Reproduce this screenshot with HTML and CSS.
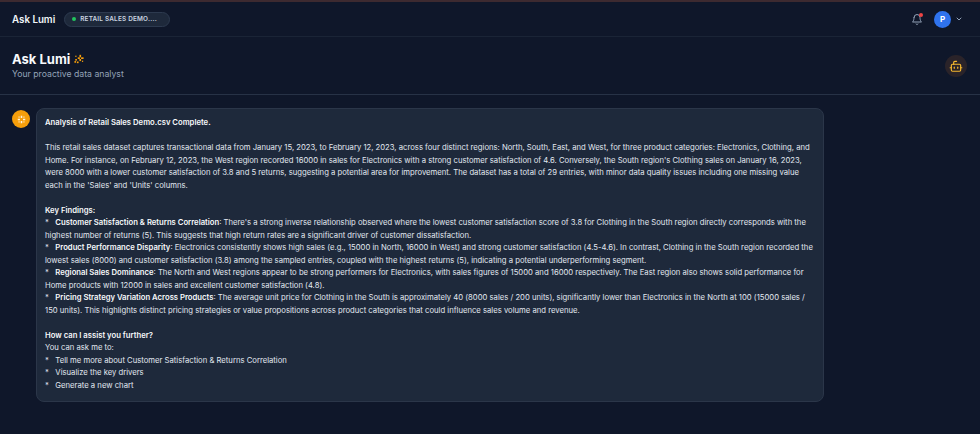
FILE: index.html
```html
<!DOCTYPE html>
<html lang="en">
<head>
    <meta charset="UTF-8">
    <meta name="viewport" content="width=device-width, initial-scale=1.0">
    <title>Ask Lumi</title>
    <link rel="stylesheet" href="styles.css">
</head>
<body>
    <div class="top-strip"></div>

    <!-- Top bar -->
    <header class="topbar">
        <div class="topbar-left">
            <span class="brand">Ask Lumi</span>
            <div class="file-pill">
                <span class="status-dot"></span>
                <span>RETAIL SALES DEMO....</span>
            </div>
        </div>
        <div class="topbar-right">
            <div class="bell">
                <svg width="12" height="13" viewBox="0 0 24 24" fill="none" stroke="#94a3b8" stroke-width="2" stroke-linecap="round" stroke-linejoin="round">
                    <path d="M6 8a6 6 0 0 1 12 0c0 7 3 9 3 9H3s3-2 3-9"/>
                    <path d="M10.3 21a1.9 1.9 0 0 0 3.4 0"/>
                </svg>
                <span class="bell-dot"></span>
            </div>
            <div class="avatar">P</div>
            <svg class="chevron" width="8" height="8" viewBox="0 0 24 24" fill="none" stroke="#94a3b8" stroke-width="3" stroke-linecap="round" stroke-linejoin="round">
                <path d="m6 9 6 6 6-6"/>
            </svg>
        </div>
    </header>

    <!-- Page heading -->
    <section class="page-head">
        <div>
            <h1>Ask Lumi
                <svg class="sparkle" width="10" height="10" viewBox="0 0 24 24" fill="#f59e0b">
                    <rect x="13" y="2" width="4" height="6"/>
                    <rect x="17" y="8" width="6" height="4"/>
                    <rect x="9" y="8" width="5" height="4"/>
                    <rect x="13" y="12" width="4" height="5"/>
                    <rect x="3" y="12" width="4" height="4"/>
                    <rect x="1" y="17" width="4" height="4"/>
                    <rect x="7" y="18" width="4" height="4"/>
                    <rect x="3" y="4" width="3" height="3"/>
                    <rect x="19" y="16" width="3" height="3"/>
                </svg>
            </h1>
            <p class="subtitle">Your proactive data analyst</p>
        </div>
        <div class="bot-btn">
            <svg width="14" height="14" viewBox="0 0 24 24" fill="none" stroke="#f5b82e" stroke-width="2" stroke-linecap="round" stroke-linejoin="round">
                <path d="M8 9V6a2 2 0 0 1 2-2h3"/>
                <rect x="4" y="9" width="16" height="12" rx="2"/>
                <path d="M2 15h2"/>
                <path d="M20 15h2"/>
                <path d="M15 14v2"/>
                <path d="M9 14v2"/>
            </svg>
        </div>
    </section>

    <!-- Chat -->
    <main class="chat">
        <div class="msg-icon">
            <svg width="9" height="9" viewBox="0 0 24 24" fill="#fff3dc">
                <rect x="10" y="2" width="4" height="6"/>
                <rect x="10" y="16" width="4" height="6"/>
                <rect x="2" y="10" width="6" height="4"/>
                <rect x="16" y="10" width="6" height="4"/>
                <rect x="4" y="4" width="3" height="3"/>
                <rect x="17" y="4" width="3" height="3"/>
                <rect x="4" y="17" width="3" height="3"/>
                <rect x="17" y="17" width="3" height="3"/>
            </svg>
        </div>
        <div class="bubble">
            <p><strong>Analysis of Retail Sales Demo.csv Complete.</strong></p>

            <p>This retail sales dataset captures transactional data from January 15, 2023, to February 12, 2023, across four distinct regions: North, South, East, and West, for three product categories: Electronics, Clothing, and Home. For instance, on February 12, 2023, the West region recorded 16000 in sales for Electronics with a strong customer satisfaction of 4.6. Conversely, the South region's Clothing sales on January 16, 2023, were 8000 with a lower customer satisfaction of 3.8 and 5 returns, suggesting a potential area for improvement. The dataset has a total of 29 entries, with minor data quality issues including one missing value each in the 'Sales' and 'Units' columns.</p>

            <div class="block">
                <div><strong>Key Findings:</strong></div>
                <div>*&nbsp;&nbsp;&nbsp;<strong>Customer Satisfaction &amp; Returns Correlation</strong>: There's a strong inverse relationship observed where the lowest customer satisfaction score of 3.8 for Clothing in the South region directly corresponds with the highest number of returns (5). This suggests that high return rates are a significant driver of customer dissatisfaction.</div>
                <div>*&nbsp;&nbsp;&nbsp;<strong>Product Performance Disparity</strong>: Electronics consistently shows high sales (e.g., 15000 in North, 16000 in West) and strong customer satisfaction (4.5-4.6). In contrast, Clothing in the South region recorded the lowest sales (8000) and customer satisfaction (3.8) among the sampled entries, coupled with the highest returns (5), indicating a potential underperforming segment.</div>
                <div>*&nbsp;&nbsp;&nbsp;<strong>Regional Sales Dominance</strong>: The North and West regions appear to be strong performers for Electronics, with sales figures of 15000 and 16000 respectively. The East region also shows solid performance for Home products with 12000 in sales and excellent customer satisfaction (4.8).</div>
                <div>*&nbsp;&nbsp;&nbsp;<strong>Pricing Strategy Variation Across Products</strong>: The average unit price for Clothing in the South is approximately 40 (8000 sales / 200 units), significantly lower than Electronics in the North at 100 (15000 sales / 150 units). This highlights distinct pricing strategies or value propositions across product categories that could influence sales volume and revenue.</div>
            </div>

            <div class="block">
                <div><strong>How can I assist you further?</strong></div>
                <div>You can ask me to:</div>
                <div>*&nbsp;&nbsp;&nbsp;Tell me more about Customer Satisfaction &amp; Returns Correlation</div>
                <div>*&nbsp;&nbsp;&nbsp;Visualize the key drivers</div>
                <div>*&nbsp;&nbsp;&nbsp;Generate a new chart</div>
            </div>
        </div>
    </main>
</body>
</html>
```

FILE: styles.css
```css
* {
    box-sizing: border-box;
}
html, body {
    height: 100%;
}
body {
    margin: 0;
    padding: 0;
    overflow: hidden;
    font-family: Inter, "Liberation Sans", sans-serif;
    background-color: #0f172a;
    color: #e2e8f0;
}
.top-strip {
    height: 2px;
    background-color: #3d2a30;
}
.topbar {
    height: 35px;
    padding: 0 16px 0 12px;
    display: flex;
    justify-content: space-between;
    align-items: center;
    border-bottom: 1px solid #1a2436;
}
.topbar-left {
    display: flex;
    align-items: center;
    gap: 9px;
}
.brand {
    font-size: 9.75px;
    font-weight: 600;
    color: #f1f5f9;
}
.file-pill {
    height: 15px;
    padding: 0 12px 0 7px;
    display: flex;
    align-items: center;
    gap: 4px;
    border: 1px solid #2d3a4f;
    border-radius: 8px;
    background-color: #1e293b;
    color: #cbd5e1;
    font-size: 6.4px;
    font-weight: 600;
    letter-spacing: 0.2px;
}
.status-dot {
    width: 4px;
    height: 4px;
    border-radius: 50%;
    background-color: #22c55e;
}
.topbar-right {
    display: flex;
    align-items: center;
}
.bell {
    position: relative;
    display: flex;
    margin-right: 11px;
}
.bell-dot {
    position: absolute;
    top: 0;
    right: 0;
    width: 4px;
    height: 4px;
    border-radius: 50%;
    background-color: #ef4444;
}
.avatar {
    width: 17px;
    height: 17px;
    border-radius: 50%;
    background-color: #2f73ee;
    color: #fff;
    font-size: 8px;
    font-weight: 700;
    display: flex;
    align-items: center;
    justify-content: center;
    margin-right: 4px;
}
.chevron {
    margin-right: 1px;
}
.page-head {
    height: 58px;
    padding: 0 12px;
    display: flex;
    justify-content: space-between;
    align-items: center;
    border-bottom: 1px solid #273246;
}
h1 {
    margin: 0;
    font-size: 13px;
    line-height: 17px;
    font-weight: 700;
    color: #f8fafc;
    display: flex;
    align-items: center;
    gap: 4px;
}
.subtitle {
    margin: 0;
    font-size: 8.7px;
    line-height: 13px;
    color: #94a3b8;
}
.bot-btn {
    width: 22px;
    height: 22px;
    border-radius: 50%;
    background-color: #2a2329;
    display: flex;
    align-items: center;
    justify-content: center;
    margin-right: 1px;
}
.chat {
    padding: 13px 156px 0 12px;
    display: flex;
    align-items: flex-start;
    gap: 6px;
}
.msg-icon {
    flex: none;
    width: 18px;
    height: 18px;
    margin-top: 2px;
    border-radius: 50%;
    background-color: #f59e0b;
    display: flex;
    align-items: center;
    justify-content: center;
}
.bubble {
    flex: 1;
    padding: 8px 8px 9px;
    background-color: #1e293b;
    border: 1px solid #2b3649;
    border-radius: 8px;
    font-size: 7.7px;
    line-height: 12.5px;
    color: #e2e8f0;
}
.bubble p {
    margin: 0 0 12.5px;
}
.block {
    margin-bottom: 12.5px;
}
.block:last-child {
    margin-bottom: 0;
}
.bubble strong {
    font-weight: 600;
    color: #f8fafc;
}
```
